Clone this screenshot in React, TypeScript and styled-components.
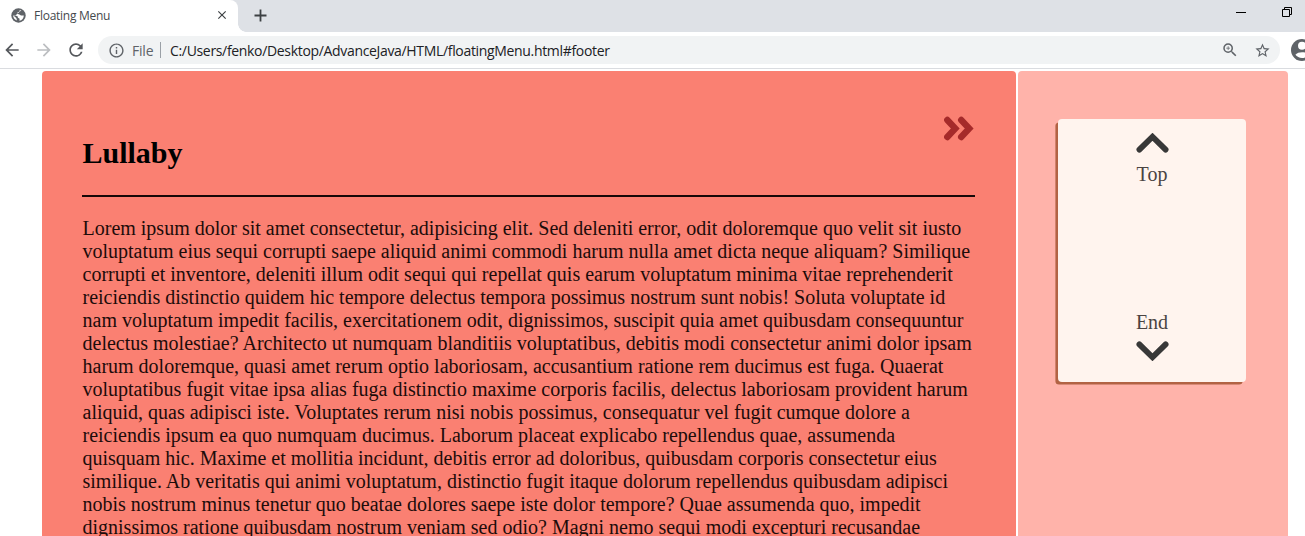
import React from 'react';
import styled, { createGlobalStyle } from 'styled-components';
import {
  MdArrowBack,
  MdArrowForward,
  MdRefresh,
  MdClose,
  MdInfoOutline,
  MdZoomIn,
  MdStarBorder,
} from 'react-icons/md';

const GlobalStyle = createGlobalStyle`
  * { box-sizing: border-box; }
  html, body { margin: 0; overflow: hidden; background: #fff; }
  svg { display: block; flex: none; }
`;

const Window = styled.div`
  width: 1305px;
  height: 536px;
  overflow: hidden;
  display: flex;
  flex-direction: column;
  font-family: 'Open Sans', 'Noto Sans', sans-serif;
`;

const TabStrip = styled.div`
  display: flex;
  height: 32px;
  flex: none;
  background: #dee1e6;
`;

const Tab = styled.div`
  display: flex;
  align-items: center;
  width: 238px;
  height: 32px;
  padding: 0 9px 2px 11px;
  background: #fff;
  border-top-right-radius: 8px;
  color: #5f6368;
`;

const TabTitle = styled.span`
  flex: 1;
  margin-left: 8px;
  font-size: 12px;
  letter-spacing: -0.27px;
  color: #45494d;
`;

const NewTab = styled.div`
  display: flex;
  align-items: center;
  flex: 1;
  padding: 0 0 2px 8px;
  color: #3c4043;
`;

const TabCurve = styled.div`
  align-self: flex-end;
  width: 8px;
  height: 8px;
  background: radial-gradient(circle at 100% 0, #dee1e6 7.5px, #fff 8px);
`;

const WindowControls = styled.div`
  display: flex;
  gap: 36px;
  padding: 7px 13px 0 0;
`;

const Toolbar = styled.div`
  display: flex;
  align-items: center;
  height: 37px;
  flex: none;
  padding-left: 2px;
  border-bottom: 1px solid #dadce0;
  color: #5f6368;
`;

const NavButton = styled.div<{ $disabled?: boolean }>`
  width: 32px;
  flex: none;
  color: ${(p) => (p.$disabled ? '#bcbec1' : '#55585c')};
`;

const AddressBar = styled.div`
  display: flex;
  align-items: center;
  flex: none;
  width: 1182px;
  height: 28px;
  padding: 0 9px 0 10px;
  border-radius: 14px;
  background: #f1f3f4;
  font-size: 14px;
`;

const Scheme = styled.span`
  margin-left: 7px;
  width: 21px;
  white-space: nowrap;
  letter-spacing: -0.2px;
`;

const Divider = styled.span`
  width: 1px;
  height: 16px;
  margin: 0 9px 0 7px;
  background: #9aa0a6;
`;

const Url = styled.span`
  flex: 1;
  color: #202124;
  letter-spacing: -0.33px;
`;

const AddressActions = styled.div`
  display: flex;
  align-items: center;
  gap: 15px;
`;

const Avatar = styled.div`
  margin-left: 11px;
`;

const Page = styled.main`
  display: flex;
  gap: 2px;
  flex: 1;
  min-height: 0;
  padding: 2px 17px 0 42px;
  font-family: 'Liberation Serif', 'Times New Roman', serif;
  font-size: 20px;
  line-height: 23px;
`;

const Article = styled.article`
  width: 974px;
  padding: 0 41px 0 40px;
  border-radius: 4px 4px 0 0;
  background: #fa8072;
  color: #1d0c0a;
`;

const ArticleHeader = styled.header`
  display: flex;
  justify-content: space-between;
  height: 126px;
  padding: 45px 1px 0 0.5px;
  border-bottom: 2px solid #150808;
  color: brown;
`;

const Title = styled.h2`
  margin: 19px 0 0;
  font-size: 30px;
  line-height: 35px;
  color: #000;
`;

const Paragraph = styled.p`
  margin: 20px 0 0 0.5px;
`;

const Line = styled.span`
  display: block;
  white-space: nowrap;
`;

const Sidebar = styled.aside`
  width: 270px;
  padding: 48px 42px 0 40px;
  border-radius: 4px 4px 0 0;
  background: #ffb3aa;
`;

const FloatingMenu = styled.nav`
  display: flex;
  flex-direction: column;
  align-items: center;
  justify-content: space-between;
  height: 263px;
  padding: 14px 0 21px;
  border-radius: 4px;
  background: #fff4ee;
  box-shadow: -3px 3px 0 -0.4px #b26344;
`;

const MenuItem = styled.a<{ $gap: number }>`
  display: flex;
  flex-direction: column;
  align-items: center;
  gap: ${(p) => p.$gap}px;
  color: #4a4442;
`;

const ChevronSvg = styled.svg<{ $down?: boolean }>`
  transform: ${(p) => (p.$down ? 'scaleY(-1)' : 'none')};
  fill: none;
  stroke: #383838;
  stroke-width: 5.8px;
  stroke-linecap: round;
`;

const Chevron = ({ down }: { down?: boolean }) => (
  <ChevronSvg $down={down} width="33" height="20" viewBox="0 0 33 20">
    <path d="M3.4 16.6 16.5 3.8 29.6 16.6" />
  </ChevronSvg>
);

const lines = [
  'Lorem ipsum dolor sit amet consectetur, adipisicing elit. Sed deleniti error, odit doloremque quo velit sit iusto',
  'voluptatum eius sequi corrupti saepe aliquid animi commodi harum nulla amet dicta neque aliquam? Similique',
  'corrupti et inventore, deleniti illum odit sequi qui repellat quis earum voluptatum minima vitae reprehenderit',
  'reiciendis distinctio quidem hic tempore delectus tempora possimus nostrum sunt nobis! Soluta voluptate id',
  'nam voluptatum impedit facilis, exercitationem odit, dignissimos, suscipit quia amet quibusdam consequuntur',
  'delectus molestiae? Architecto ut numquam blanditiis voluptatibus, debitis modi consectetur animi dolor ipsam',
  'harum doloremque, quasi amet rerum optio laboriosam, accusantium ratione rem ducimus est fuga. Quaerat',
  'voluptatibus fugit vitae ipsa alias fuga distinctio maxime corporis facilis, delectus laboriosam provident harum',
  'aliquid, quas adipisci iste. Voluptates rerum nisi nobis possimus, consequatur vel fugit cumque dolore a',
  'reiciendis ipsum ea quo numquam ducimus. Laborum placeat explicabo repellendus quae, assumenda',
  'quisquam hic. Maxime et mollitia incidunt, debitis error ad doloribus, quibusdam corporis consectetur eius',
  'similique. Ab veritatis qui animi voluptatum, distinctio fugit itaque dolorum repellendus quibusdam adipisci',
  'nobis nostrum minus tenetur quo beatae dolores saepe iste dolor tempore? Quae assumenda quo, impedit',
  'dignissimos ratione quibusdam nostrum veniam sed odio? Magni nemo sequi modi excepturi recusandae',
];

export default function App() {
  return (
    <Window>
      <GlobalStyle />
      <TabStrip>
        <Tab>
          <svg width="15" height="15" viewBox="0 0 15 15">
            <circle cx="7.5" cy="7.5" r="7.2" fill="#5f6368" />
            <path
              d="M10.4 2.3 8.6 2.2 8.4 3.8 6.6 4.2 6.3 5.8 8.4 6.4 10 7.6 12.8 7.4C12.9 10 11 12.2 8.4 12.7L8.6 10.8 7 9.8 6.4 8 2.1 7.6C2.2 9.8 3.6 11.7 5.6 12.5L5.8 11 4.8 9.6 3.2 8.4"
              fill="#fff"
            />
          </svg>
          <TabTitle>Floating Menu</TabTitle>
          <MdClose size={14} color="#3c4043" />
        </Tab>
        <TabCurve />
        <NewTab>
          <svg width="13" height="13" viewBox="0 0 13 13" stroke="currentColor" strokeWidth="1.8">
            <path d="M6.5 .5v12M.5 6.5h12" />
          </svg>
        </NewTab>
        <WindowControls>
          <svg width="10" height="12" viewBox="0 0 10 12" stroke="#000">
            <path d="M0 5.5h10" />
          </svg>
          <svg width="10" height="10" viewBox="0 0 10 10" fill="none" stroke="#000">
            <path d="M.5 2.5h7v7h-7zM2.5 2.5v-2h7v7h-2" />
          </svg>
        </WindowControls>
      </TabStrip>
      <Toolbar>
        <NavButton><MdArrowBack size={20} /></NavButton>
        <NavButton $disabled><MdArrowForward size={20} /></NavButton>
        <NavButton><MdRefresh size={20} /></NavButton>
        <AddressBar>
          <MdInfoOutline size={17} />
          <Scheme>File</Scheme>
          <Divider />
          <Url>C:/Users/fenko/Desktop/AdvanceJava/HTML/floatingMenu.html#footer</Url>
          <AddressActions>
            <MdZoomIn size={18} />
            <MdStarBorder size={17} />
          </AddressActions>
        </AddressBar>
        <Avatar>
          <svg width="22" height="22" viewBox="0 0 22 22">
            <circle cx="11" cy="11" r="11" fill="#5f6368" />
            <circle cx="11" cy="6.8" r="4" fill="#fff" />
            <path d="M4.4 15.8C5.8 13.9 8.3 13.2 11 13.2s5.2.7 6.6 2.6C16 17.8 13.8 19 11 19s-5-1.2-6.6-3.2z" fill="#fff" />
          </svg>
        </Avatar>
      </Toolbar>
      <Page>
        <Article>
          <ArticleHeader>
            <Title>Lullaby</Title>
            <svg
              width="30"
              height="25"
              viewBox="0 0 30 25"
              fill="none"
              stroke="currentColor"
              strokeWidth="6.4"
              strokeLinecap="round"
            >
              <path d="M3.3 4 11.3 12.5 3.3 21M17.2 4 25.2 12.5 17.2 21" />
            </svg>
          </ArticleHeader>
          <Paragraph>
            {lines.map((line) => (
              <Line key={line}>{line}</Line>
            ))}
          </Paragraph>
        </Article>
        <Sidebar>
          <FloatingMenu>
            <MenuItem $gap={10}>
              <Chevron />
              Top
            </MenuItem>
            <MenuItem $gap={7}>
              End
              <Chevron down />
            </MenuItem>
          </FloatingMenu>
        </Sidebar>
      </Page>
    </Window>
  );
}
